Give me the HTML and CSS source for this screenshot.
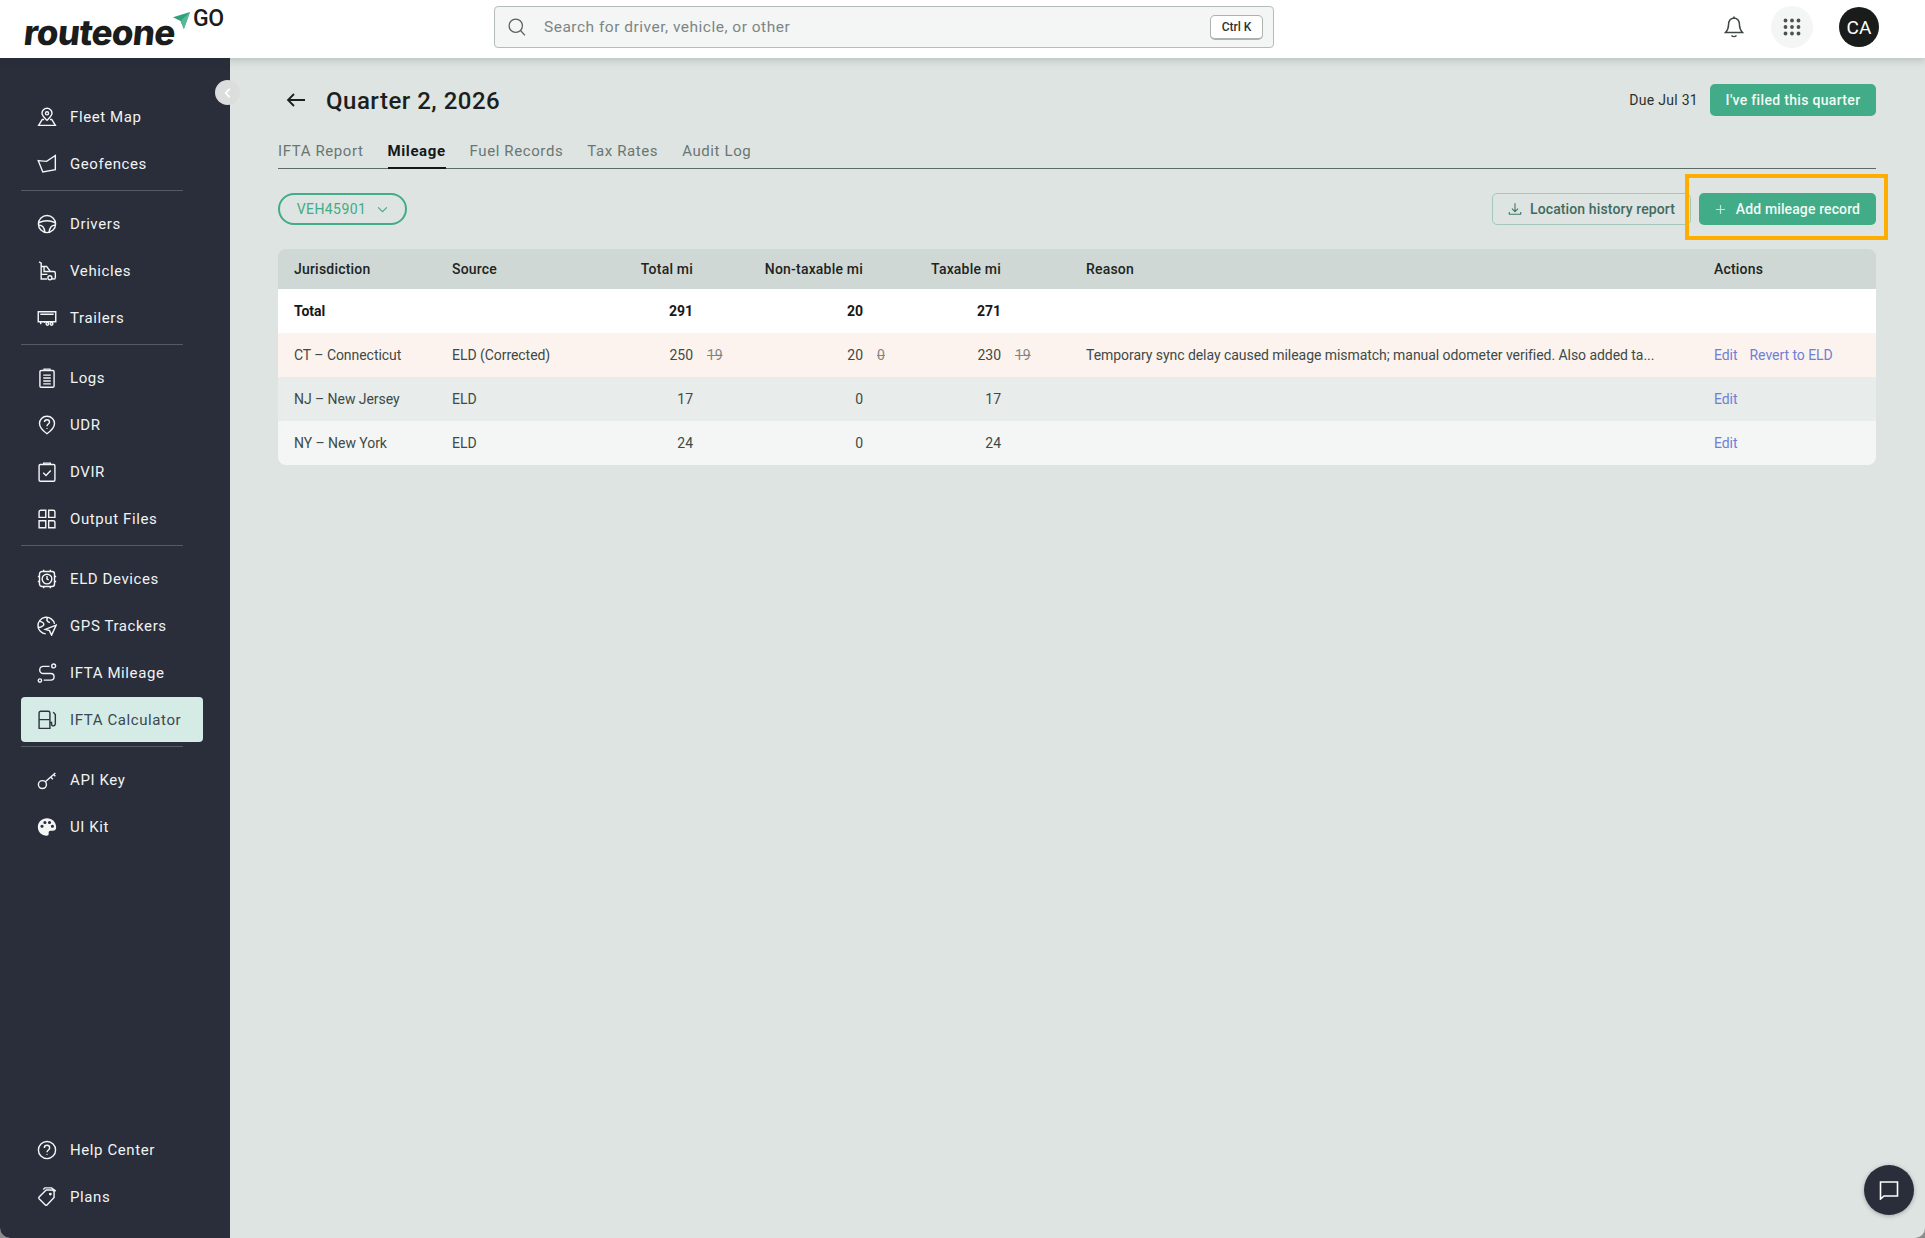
FILE: index.html
```html
<!DOCTYPE html>
<html lang="en">
<head>
<meta charset="utf-8">
<title>IFTA Calculator</title>
<link rel="stylesheet" href="styles.css">
</head>
<body>
<div class="app">
  <header class="topbar">
    <a class="logo">
      <span class="logo-word">routeone</span>
      <svg class="logo-mark" viewBox="0 0 18 18"><path d="M0 5.500 18 0 11.500 18 8 9.500z" fill="#2f9f7c"/><path d="M18 0 8 9.500 11.500 18z" fill="#54b998"/></svg>
      <span class="logo-go">GO</span>
    </a>
    <div class="search">
      <svg class="search-icon" viewBox="0 0 24 24"><circle cx="10.500" cy="10.500" r="8"/><path d="m16.500 16.500 5 5.500"/></svg>
      <span class="search-text">Search for driver, vehicle, or other</span>
      <kbd class="kbd">Ctrl K</kbd>
    </div>
    <div class="top-actions">
      <svg class="bell" viewBox="0 0 24 24"><path d="M12 3a1 1 0 0 0 0 .1C8 3.600 6.500 6.500 6.500 10c0 4-1 5.500-3 7.500h17c-2-2-3-3.500-3-7.500 0-3.500-1.500-6.400-5.500-6.900z"/><path d="M12 1.500v2M9.500 20.500c1.300 1.300 3.700 1.300 5 0"/></svg>
      <span class="apps">
        <svg viewBox="0 0 18 18"><g fill="#4c5452"><circle cx="2.500" cy="2.500" r="1.900"/><circle cx="9" cy="2.500" r="1.900"/><circle cx="15.500" cy="2.500" r="1.900"/><circle cx="2.500" cy="9" r="1.900"/><circle cx="9" cy="9" r="1.900"/><circle cx="15.500" cy="9" r="1.900"/><circle cx="2.500" cy="15.500" r="1.900"/><circle cx="9" cy="15.500" r="1.900"/><circle cx="15.500" cy="15.500" r="1.900"/></g></svg>
      </span>
      <span class="avatar">CA</span>
    </div>
  </header>

  <aside class="sidebar">
    <nav class="nav">
      <a class="nav-item"><svg class="ico" viewBox="0 0 24 24"><path d="M12 1.500a6 6 0 0 0-6 6c0 3 3.300 5.700 6 8.500 2.700-2.800 6-5.500 6-8.500a6 6 0 0 0-6-6z"/><circle cx="12" cy="7.500" r="1.900"/><path d="M8.500 15H6.300L2 22h20l-4.300-7h-2.200"/></svg><span>Fleet Map</span></a>
      <a class="nav-item"><svg class="ico" viewBox="0 0 24 24"><path d="M1.500 8l10 .8 10.500-7v17L7 21.500z"/></svg><span>Geofences</span></a>
      <hr class="nav-div">
      <a class="nav-item"><svg class="ico" viewBox="0 0 24 24"><circle cx="12" cy="12" r="10.300"/><path d="M2 10.500c6.500-3.200 13.500-3.200 20 0M2 13.500c4-.5 7 2.500 7.500 8.500M22 13.500c-4-.5-7 2.500-7.500 8.500"/></svg><span>Drivers</span></a>
      <a class="nav-item"><svg class="ico" viewBox="0 0 24 24"><path d="M2.500 1l2.500 1.500v19h7M5 6.500h6.500l4.500 6h4c1.300 0 2 .8 2 2v6.500"/><path d="M8.500 7v5.500h7M5 16h7.500"/><circle cx="15.500" cy="20" r="2.400"/><path d="M18 21.500h4"/></svg><span>Vehicles</span></a>
      <a class="nav-item"><svg class="ico" viewBox="0 0 24 24"><path d="M1.500 4.500h21v12h-21zM4 7.500h16"/><path d="M4.500 16.500v3M9 16.500v1.500"/><circle cx="12.500" cy="19" r="1.600"/><circle cx="17.500" cy="19" r="1.600"/></svg><span>Trailers</span></a>
      <hr class="nav-div">
      <a class="nav-item"><svg class="ico" viewBox="0 0 24 24"><rect x="3.500" y="3" width="17" height="20" rx="1.500"/><path d="M8.500 3V1.300h7V3M7.500 8.500h9M7.500 12h9M7.500 15.500h9M7.500 19h9"/></svg><span>Logs</span></a>
      <a class="nav-item"><svg class="ico" viewBox="0 0 24 24"><path d="M12 1.500c-5.500 0-9 4-9 8.800 0 5.200 4.500 9 9 12.200 4.500-3.200 9-7 9-12.200 0-4.800-3.500-8.800-9-8.800z"/><path d="M9 8.500c0-3.800 6-3.800 6 0 0 2.300-3 2.500-3 5M12 15.800v1"/></svg><span>UDR</span></a>
      <a class="nav-item"><svg class="ico" viewBox="0 0 24 24"><rect x="2.500" y="3" width="19" height="20" rx="1.500"/><path d="M8 3V1.300h8V3M7.500 13l3.300 3.300 5.700-6"/></svg><span>DVIR</span></a>
      <a class="nav-item"><svg class="ico" viewBox="0 0 24 24"><path d="M4.500 1.500h6v8.500H2.500V3.500a2 2 0 0 1 2-2zM14 1.500h5.500a2 2 0 0 1 2 2V10H14zM2.500 14h8v8.500h-8zM14 14h5.500a2 2 0 0 1 2 2v6.500H14z"/></svg><span>Output Files</span></a>
      <hr class="nav-div">
      <a class="nav-item"><svg class="ico" viewBox="0 0 24 24"><rect x="3" y="3" width="18" height="18" rx="3"/><circle cx="12" cy="12" r="5.800"/><path d="M12 8.500V12l2 1M8 1v2M16 1v2M8 21v2M16 21v2M1 9h2M1 15h2M21 9h2M21 15h2"/></svg><span>ELD Devices</span></a>
      <a class="nav-item"><svg class="ico" viewBox="0 0 24 24"><path d="M10.500 21.500a10 10 0 1 1 10.500-12"/><path d="M3 6c2 1 4 1 5 3s-1 3-3 4-3 1-4 0M12.500 2c-1 2-1 4 1 5l2 1"/><path d="M23 11 10 16l5 1.500 2.500 5.500z"/></svg><span>GPS Trackers</span></a>
      <a class="nav-item"><svg class="ico" viewBox="0 0 24 24"><circle cx="20" cy="3.500" r="2.300"/><circle cx="3.500" cy="21" r="2"/><path d="M15 4H7.500a4.200 4.200 0 0 0 0 8.500h9a3.800 3.800 0 0 1 0 8H8"/></svg><span>IFTA Mileage</span></a>
      <a class="nav-item is-active"><svg class="ico" viewBox="0 0 24 24"><path d="M2.500 22V3.500a2 2 0 0 1 2-2h9a2 2 0 0 1 2 2V22zM2.500 11.500h13"/><path d="M19.500 2.500l2.500 3v11a2.500 2.500 0 0 1-4.500 1.500V15h-2"/></svg><span>IFTA Calculator</span></a>
      <hr class="nav-div">
      <a class="nav-item"><svg class="ico" viewBox="0 0 24 24"><circle cx="6.500" cy="17.500" r="4.800"/><path d="M10 14 22 3.500M16.500 8.500l2.500 2.500M20 5.500l2 2"/></svg><span>API Key</span></a>
      <a class="nav-item"><svg class="ico ico-fill" viewBox="0 0 24 24"><path fill-rule="evenodd" d="M12 1.500C6 1.500 1 6.200 1 12c0 5.800 4.700 10.500 10.500 10.500 2 0 2.800-1.200 2.500-2.700-.3-1.800.5-3.300 2.500-3.300h2.500c2.400 0 4-1.600 4-4C23 6 18 1.500 12 1.500zM6 13a1.900 1.900 0 1 1 0-3.800A1.900 1.900 0 0 1 6 13zM9.500 8.500a1.900 1.900 0 1 1 0-3.800 1.900 1.900 0 0 1 0 3.800zM15 8.500a1.900 1.900 0 1 1 0-3.800 1.900 1.900 0 0 1 0 3.800zM18.500 13a1.900 1.900 0 1 1 0-3.800 1.900 1.900 0 0 1 0 3.800z"/></svg><span>UI Kit</span></a>
    </nav>
    <nav class="nav nav-bottom">
      <a class="nav-item"><svg class="ico" viewBox="0 0 24 24"><circle cx="12" cy="12" r="10.300"/><path d="M8.800 9.500c0-4.200 6.400-4.200 6.400 0 0 2.500-3.200 2.700-3.200 5.300M12 17v1"/></svg><span>Help Center</span></a>
      <a class="nav-item"><svg class="ico" viewBox="0 0 24 24"><path d="M2.500 12 11 3.500h7.500l2 2v7l-8.500 9a1.500 1.500 0 0 1-2 0l-7.500-7.500a1.500 1.500 0 0 1 0-2z"/><path d="M7.500 3 9.500 1h8l5 4"/><circle cx="16" cy="8.500" r=".9"/></svg><span>Plans</span></a>
    </nav>
  </aside>
  <button class="collapse" type="button" aria-label="Collapse"><svg viewBox="0 0 10 14"><path d="M7.500 2 3 7l4.500 5"/></svg></button>

  <main class="main">
    <div class="title-row">
      <div class="title-left">
        <svg class="back" viewBox="0 0 20 16"><path d="M19 8H2M8 2 2 8l6 6"/></svg>
        <h1 class="title">Quarter 2, 2026</h1>
      </div>
      <div class="title-right">
        <span class="due">Due Jul 31</span>
        <button class="btn btn-primary btn-filed" type="button">I've filed this quarter</button>
      </div>
    </div>

    <div class="tabs">
      <a class="tab">IFTA Report</a>
      <a class="tab is-active">Mileage</a>
      <a class="tab">Fuel Records</a>
      <a class="tab">Tax Rates</a>
      <a class="tab">Audit Log</a>
    </div>

    <div class="toolbar">
      <button class="pill" type="button">VEH45901<svg viewBox="0 0 12 8"><path d="m1 1.500 5 5 5-5"/></svg></button>
      <div class="toolbar-right">
        <button class="btn btn-outline" type="button"><svg viewBox="0 0 16 16"><path d="M8 1.500v9M4.500 7.500 8 11l3.500-3.500M1.500 11.500v2.500h13v-2.500"/></svg>Location history report</button>
        <span class="highlight-wrap">
          <button class="btn btn-primary btn-add" type="button"><svg viewBox="0 0 12 12"><path d="M6 1v10M1 6h10"/></svg>Add mileage record</button>
          <span class="highlight"></span>
        </span>
      </div>
    </div>

    <div class="table">
      <div class="row row-head">
        <div>Jurisdiction</div><div>Source</div>
        <div class="num">Total mi</div><div></div>
        <div class="num">Non-taxable mi</div><div></div>
        <div class="num">Taxable mi</div><div></div>
        <div>Reason</div><div>Actions</div>
      </div>
      <div class="row row-total">
        <div>Total</div><div></div>
        <div class="num">291</div><div></div>
        <div class="num">20</div><div></div>
        <div class="num">271</div><div></div>
        <div></div><div></div>
      </div>
      <div class="row row-edited">
        <div>CT – Connecticut</div><div>ELD (Corrected)</div>
        <div class="num">250</div><div class="old"><s>19</s></div>
        <div class="num">20</div><div class="old"><s>0</s></div>
        <div class="num">230</div><div class="old"><s>19</s></div>
        <div class="reason">Temporary sync delay caused mileage mismatch; manual odometer verified. Also added ta...</div>
        <div class="actions"><a>Edit</a><a>Revert to ELD</a></div>
      </div>
      <div class="row row-a">
        <div>NJ – New Jersey</div><div>ELD</div>
        <div class="num">17</div><div></div>
        <div class="num">0</div><div></div>
        <div class="num">17</div><div></div>
        <div></div>
        <div class="actions"><a>Edit</a></div>
      </div>
      <div class="row row-b">
        <div>NY – New York</div><div>ELD</div>
        <div class="num">24</div><div></div>
        <div class="num">0</div><div></div>
        <div class="num">24</div><div></div>
        <div></div>
        <div class="actions"><a>Edit</a></div>
      </div>
    </div>
  </main>

  <button class="chat" type="button" aria-label="Chat"><svg viewBox="0 0 20 20"><path d="M1.500 2h17v14H5l-3.500 3z"/></svg></button>
</div>
</body>
</html>
```
FILE: styles.css
```css
* { box-sizing: border-box; }
html { background: #8a8d8c; }
body { margin: 0; font-family: Roboto, "Noto Sans", sans-serif; color: #1b1f1e; }
button { font-family: inherit; cursor: pointer; }
hr { margin: 0; border: 0; }

.app {
  position: relative;
  width: 1925px;
  height: 1238px;
  display: grid;
  grid-template-columns: 230px 1fr;
  grid-template-rows: 58px 1fr;
  overflow: hidden;
  border-radius: 0 0 10px 10px;
  background: #dee4e1;
}

/* Top bar */
.topbar {
  grid-column: 1 / 3;
  position: relative;
  z-index: 2;
  display: flex;
  align-items: center;
  padding-bottom: 4px;
  background: #fff;
  box-shadow: 0 2px 8px rgba(40, 50, 48, .22);
}
.logo { width: 494px; height: 54px; display: flex; position: relative; flex: none; }
.logo-word {
  position: absolute;
  left: 24px;
  top: 10px;
  font: 800 35px/44px Inter, sans-serif;
  letter-spacing: -.7px;
  color: #1b1c1c;
  transform: skewX(-6deg);
}
.logo-mark { position: absolute; left: 173px; top: 12px; width: 17px; height: 17px; }
.logo-go { position: absolute; left: 193px; top: 6px; font: 500 23px/26px Roboto, sans-serif; letter-spacing: -.5px; color: #1b1c1c; }

.search {
  width: 780px;
  height: 42px;
  display: flex;
  align-items: center;
  padding: 0 10px 0 12px;
  background: #f4f5f5;
  border: 1px solid #b5bdba;
  border-radius: 4px;
}
.search-icon { width: 20px; height: 20px; fill: none; stroke: #56605d; stroke-width: 1.5; flex: none; }
.search-text { margin-left: 17px; flex: 1; font-size: 15.5px; color: #7c8683; letter-spacing: .5px; }
.kbd {
  font: 500 12px/1 Roboto, sans-serif;
  height: 25px;
  width: 53px;
  display: flex;
  align-items: center;
  justify-content: center;
  color: #2c3331;
  background: #fff;
  border: 1px solid #aab3b0;
  border-bottom-width: 2px;
  border-radius: 5px;
}
.top-actions { margin-left: auto; display: flex; align-items: center; padding-right: 46px; }
.bell { width: 24px; height: 24px; fill: none; stroke: #3f4745; stroke-width: 1.5; margin-right: 25px; }
.apps { width: 42px; height: 42px; border-radius: 50%; background: #f4f5f5; display: flex; align-items: center; justify-content: center; margin-right: 26px; }
.apps svg { width: 18px; height: 18px; }
.avatar { width: 40px; height: 40px; border-radius: 50%; background: #1a1c1c; color: #fff; font-size: 19px; display: flex; align-items: center; justify-content: center; }

/* Sidebar */
.sidebar {
  background: #2a2d3a;
  display: flex;
  flex-direction: column;
  justify-content: space-between;
  padding: 35px 0 18px 21px;
}
.nav { display: flex; flex-direction: column; }
.nav-item {
  width: 182px;
  height: 45px;
  margin: 1px 0;
  padding-left: 16px;
  display: flex;
  align-items: center;
  gap: 13px;
  border-radius: 4px;
  color: #f0f4f3;
  font-size: 15px;
  letter-spacing: .6px;
}
.nav-item.is-active { background: #d4ece5; color: #3c4753; }
.ico { width: 20px; height: 20px; flex: none; fill: none; stroke: #f4f6f6; stroke-width: 1.700; }
.ico-fill { fill: #f4f6f6; stroke: none; }
.is-active .ico { stroke: #2f3440; }
.nav-div { width: 162px; height: 1px; background: #565966; margin: 3px 0 9px; }

.collapse {
  position: absolute;
  left: 215px;
  top: 80px;
  z-index: 3;
  width: 25px;
  height: 25px;
  padding: 0;
  border: 0;
  border-radius: 50%;
  background: #dcdedd;
  display: flex;
  align-items: center;
  justify-content: center;
}
.collapse svg { width: 9px; height: 12px; fill: none; stroke: #fff; stroke-width: 2; }

/* Main */
.main { padding: 0 49px 0 48px; min-width: 0; }
.title-row { height: 52px; margin-top: 16px; display: flex; align-items: center; justify-content: space-between; }
.title-left { display: flex; align-items: center; }
.back { width: 20px; height: 16px; margin-left: 8px; fill: none; stroke: #1b1f1e; stroke-width: 1.800; }
.title { margin: 2px 0 0 20px; font-size: 24px; font-weight: 500; letter-spacing: .5px; color: #1b1f1e; }
.title-right { display: flex; align-items: center; gap: 12px; }
.due { font-size: 14px; color: #2a302e; letter-spacing: .3px; }

.btn {
  height: 32px;
  display: inline-flex;
  align-items: center;
  font-size: 14px;
  font-weight: 500;
  letter-spacing: .12px;
  border-radius: 5px;
  white-space: nowrap;
}
.btn-primary { background: #42ab87; color: #f2fbf7; border: 0; }
.btn-filed { width: 166px; justify-content: center; letter-spacing: .32px; }
.btn-add { width: 177px; justify-content: center; gap: 10px; }
.btn-add svg { width: 11px; height: 11px; fill: none; stroke: #bfe6d8; stroke-width: 1.300; }
.btn-outline { width: 199px; justify-content: center; gap: 8px; background: transparent; border: 1px solid #a4c7bb; color: #3f6b62; }
.btn-outline svg { width: 14px; height: 14px; fill: none; stroke: #3f7a69; stroke-width: 1.300; }

.tabs { height: 32px; margin-top: 11px; display: flex; gap: 24px; border-bottom: 1px solid #5e6c68; }
.tab { height: 32px; padding-top: 5px; font-size: 15px; color: #6a7673; letter-spacing: .6px; }
.tab.is-active { color: #14181a; font-weight: 700; border-bottom: 2px solid #14181a; }

.toolbar { margin-top: 24px; display: flex; align-items: center; justify-content: space-between; }
.pill {
  width: 129px;
  height: 32px;
  display: flex;
  align-items: center;
  justify-content: center;
  gap: 11px;
  padding: 0;
  background: transparent;
  border: 2px solid #42ab87;
  border-radius: 16px;
  color: #42ab87;
  font-size: 14px;
  letter-spacing: .4px;
}
.pill svg { width: 11px; height: 7px; fill: none; stroke: #42ab87; stroke-width: 1.300; }
.toolbar-right { display: flex; align-items: center; gap: 8px; }
.highlight-wrap { position: relative; display: inline-flex; }
.highlight { position: absolute; left: -14px; top: -19px; width: 203px; height: 66px; border: 4px solid #ffae00; pointer-events: none; }

.table { margin-top: 24px; border-radius: 8px; overflow: hidden; font-size: 14px; color: #3d4a47; }
.row {
  display: grid;
  grid-template-columns: 158px 120px 121px 30px 140px 30px 108px 85px 628px 146px;
  padding: 0 16px;
  height: 44px;
  align-items: center;
  letter-spacing: -.05px;
}
.num { text-align: right; }
.row-head { height: 40px; background: #cfd8d5; color: #1e2422; font-weight: 500; letter-spacing: .2px; }
.row-total { background: #fff; color: #14181a; font-weight: 700; }
.row-edited { background: #fdf3ee; }
.row-a { background: #e8ecea; }
.row-b { background: #f4f6f5; }
.old { padding-left: 14px; color: #7d8885; }
.reason { white-space: nowrap; overflow: hidden; }
.actions { display: flex; gap: 12px; color: #6c80d8; }

.chat {
  position: absolute;
  right: 11px;
  bottom: 23px;
  z-index: 3;
  width: 50px;
  height: 50px;
  padding: 0;
  border: 0;
  border-radius: 50%;
  background: #2a2d3a;
  box-shadow: 0 1px 4px rgba(42, 45, 58, .35);
  display: flex;
  align-items: center;
  justify-content: center;
}
.chat svg { width: 20px; height: 20px; fill: none; stroke: #fff; stroke-width: 1.600; }
```
